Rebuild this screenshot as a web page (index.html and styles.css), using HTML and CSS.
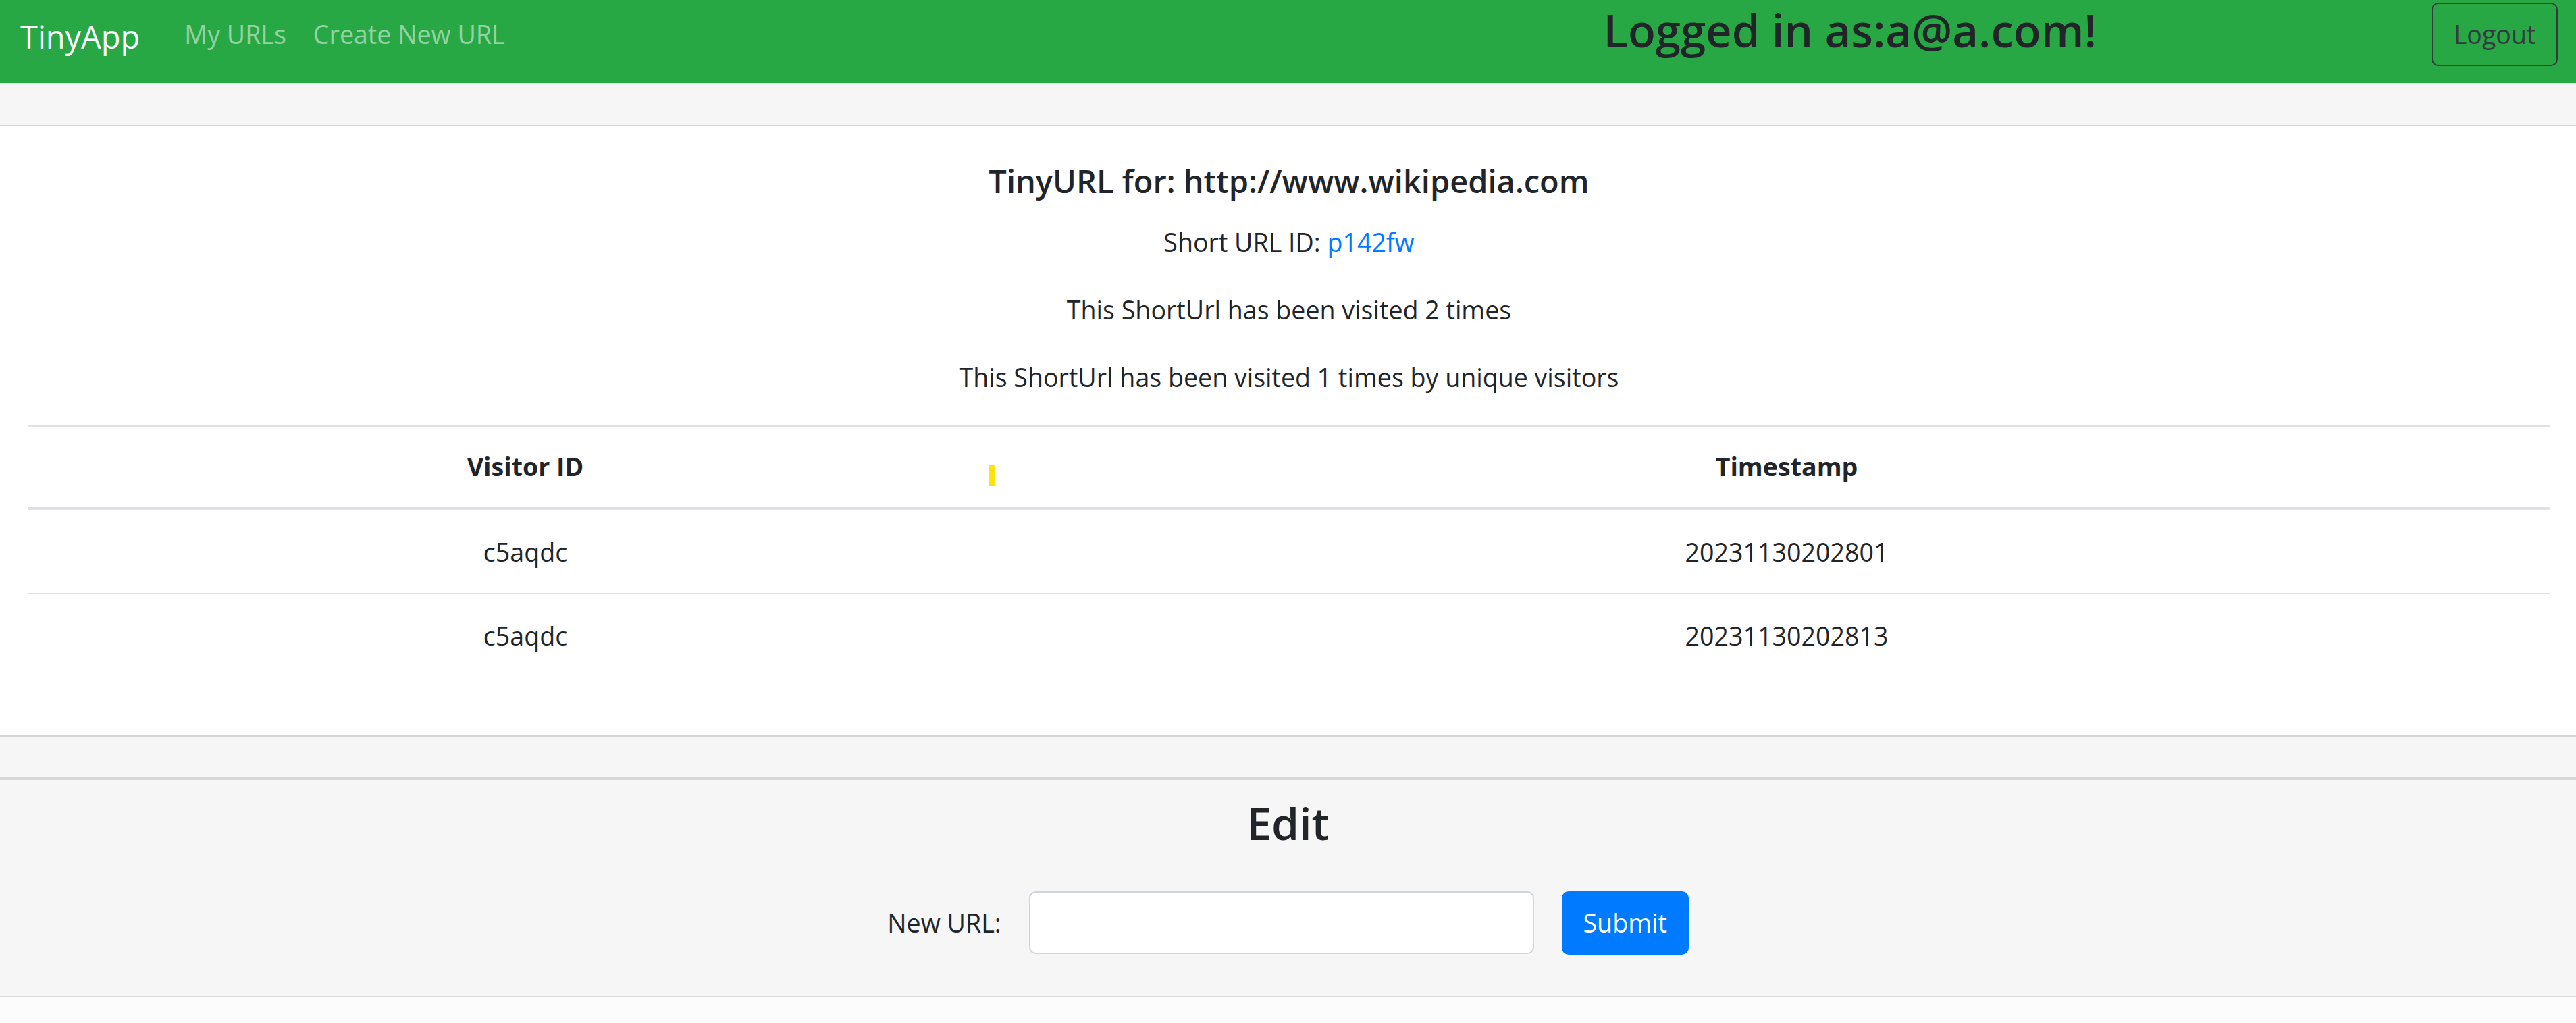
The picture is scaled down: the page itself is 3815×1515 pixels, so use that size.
FILE: index.html
```html
<!DOCTYPE html>
<html lang="en">
<head>
<meta charset="utf-8">
<title>TinyApp</title>
<link rel="stylesheet" href="styles.css">
</head>
<body>
<nav class="navbar">
  <a class="brand" href="#">TinyApp</a>
  <div class="nav-links">
    <a class="nav-link" href="#">My URLs</a>
    <a class="nav-link" href="#">Create New URL</a>
  </div>
  <h2 class="user">Logged in as:a@a.com!</h2>
  <button class="btn-logout" type="button">Logout</button>
</nav>

<section class="card card-main">
  <div class="card-header"></div>
  <div class="card-body">
    <h5 class="card-title">TinyURL for: http://www.wikipedia.com</h5>
    <p class="card-text">Short URL ID: <a class="link" href="#">p142fw</a></p>
    <p class="card-text">This ShortUrl has been visited 2 times</p>
    <p class="card-text">This ShortUrl has been visited 1 times by unique visitors</p>
    <div class="table-wrap">
      <table class="table">
        <thead>
          <tr><th class="col-id">Visitor ID</th><th>Timestamp</th></tr>
        </thead>
        <tbody>
          <tr><td>c5aqdc</td><td>20231130202801</td></tr>
          <tr><td>c5aqdc</td><td>20231130202813</td></tr>
        </tbody>
      </table>
      <span class="caret-mark"></span>
    </div>
  </div>
  <div class="card-footer"></div>
</section>

<section class="card card-edit">
  <h2 class="edit-title">Edit</h2>
  <form class="edit-form">
    <label class="edit-label" for="newurl">New URL:</label>
    <input class="form-control" id="newurl" type="text">
    <button class="btn-primary" type="submit">Submit</button>
  </form>
</section>
</body>
</html>
```
FILE: styles.css
```css
* { box-sizing: border-box; }

body {
  margin: 0;
  background: #fcfcfc;
  color: #212529;
  font-family: "Open Sans", "Noto Sans", sans-serif;
  font-size: 37.6px;
  line-height: 58.4px;
}

/* ---------- navbar ---------- */
.navbar {
  display: flex;
  align-items: flex-start;
  height: 123px;
  padding: 0 27px 0 30px;
  background: #28a745;
}
.brand {
  margin-top: 25px;
  font-size: 47px;
  line-height: 58px;
  color: #fff;
  text-decoration: none;
}
.nav-links {
  display: flex;
  margin-top: 22px;
  margin-left: 46px;
}
.nav-link {
  padding: 0 20px;
  color: rgba(255, 255, 255, 0.5);
  text-decoration: none;
}
.user {
  margin: 4px 496px 0 auto;
  font-size: 67px;
  line-height: 80px;
  font-weight: 600;
  color: #212529;
}
.btn-logout {
  margin-top: 4px;
  width: 187px;
  height: 94px;
  padding: 0;
  border: 2.4px solid #343a40;
  border-radius: 10px;
  background: transparent;
  color: #343a40;
  font-family: inherit;
  font-size: 37.6px;
  line-height: 58.4px;
}

/* ---------- cards ---------- */
.card {
  background: #fff;
}
.card-main {
  border-top: 2px solid #e0e0e0;
}
.card-header {
  height: 62px;
  background: #f6f6f6;
  border-bottom: 2px solid #d6d6d6;
}
.card-body {
  padding: 52px 38px 52px 41px;
  text-align: center;
}
.card-title {
  margin: 0 0 32.6px;
  font-size: 47px;
  line-height: 58.4px;
  font-weight: 600;
}
.card-text {
  margin: 0 0 41.5px;
}
.link {
  color: #007bff;
  text-decoration: none;
}

/* ---------- table ---------- */
.table-wrap {
  position: relative;
}
.table {
  width: 100%;
  margin-bottom: 36px;
  border-collapse: collapse;
  color: #212529;
}
.table th {
  padding: 30px 29px 31px;
  border-top: 2px solid #dee2e6;
  border-bottom: 5px solid #dee2e6;
  font-weight: 700;
  text-align: center;
}
.table td {
  padding: 33px 29px 30px;
  border-top: 2px solid #dee2e6;
  text-align: center;
}
.col-id {
  width: 1474px;
}
.caret-mark {
  position: absolute;
  left: 1423px;
  top: 59px;
  width: 10px;
  height: 30px;
  background: #ffe20a;
}

.card-footer {
  height: 64px;
  background: #f6f6f6;
  border-top: 2px solid #d6d6d6;
  border-bottom: 2px solid #d6d6d6;
}

/* ---------- edit card ---------- */
.card-edit {
  padding: 24px 0 61px;
  background: #f6f6f6;
  border-top: 2px solid #d6d6d6;
  border-bottom: 2px solid #d9d9d9;
  text-align: center;
}
.edit-title {
  margin: 0 0 62px;
  font-size: 66px;
  line-height: 79px;
  font-weight: 600;
}
.edit-form {
  display: flex;
  align-items: center;
  justify-content: center;
  gap: 41px;
}
.edit-label {
  color: #212529;
}
.form-control {
  width: 748px;
  height: 93px;
  padding: 0 29px;
  border: 2.4px solid #ced4da;
  border-radius: 10px;
  background: #fff;
  font-family: inherit;
  font-size: 37.6px;
}
.btn-primary {
  width: 188px;
  height: 94px;
  padding: 0;
  border: 0;
  border-radius: 10px;
  background: #007bff;
  color: #fff;
  font-family: inherit;
  font-size: 37.6px;
  line-height: 58.4px;
}
```
